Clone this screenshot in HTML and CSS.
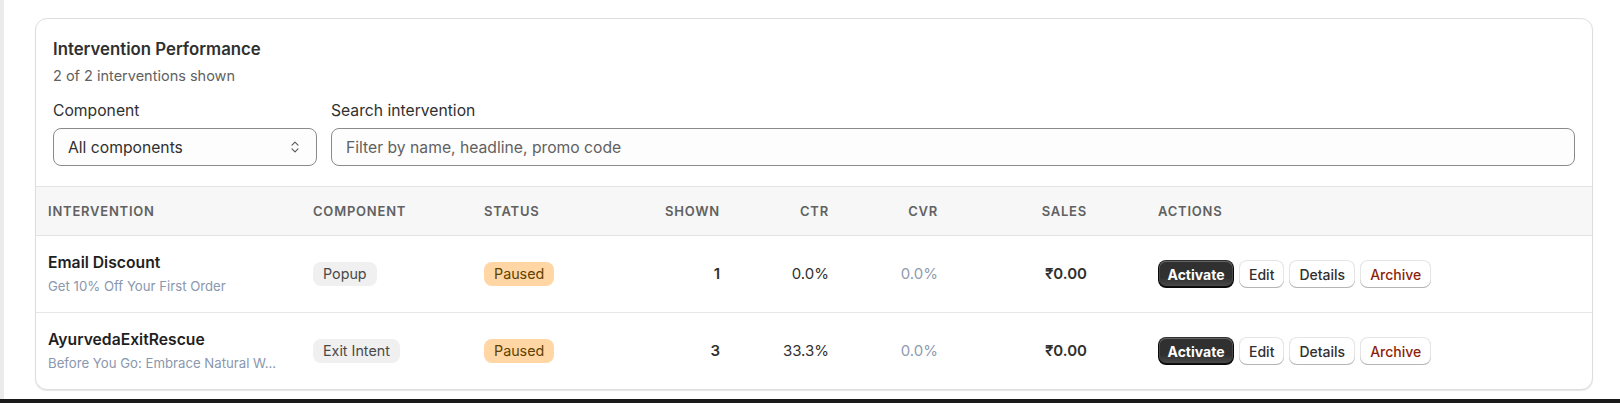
FILE: index.html
```html
<!DOCTYPE html>
<html lang="en">
<head>
<meta charset="utf-8">
<title>Intervention Performance</title>
<link rel="stylesheet" href="styles.css">
</head>
<body>
<div class="screen">
  <div class="rail"></div>
  <main class="main">
    <section class="card">
      <div class="card-head">
        <h2 class="title">Intervention Performance</h2>
        <p class="count">2 of 2 interventions shown</p>
        <div class="filters">
          <div class="field">
            <label class="label" for="comp">Component</label>
            <div class="select" id="comp">
              <span>All components</span>
              <svg class="updown" width="8" height="14" viewBox="0 0 8 14" aria-hidden="true">
                <path d="M1 5.2 L4 2.2 L7 5.2" fill="none" stroke="#5c5c5c" stroke-width="1.2" stroke-linecap="round" stroke-linejoin="round"/>
                <path d="M1 8.8 L4 11.8 L7 8.8" fill="none" stroke="#5c5c5c" stroke-width="1.2" stroke-linecap="round" stroke-linejoin="round"/>
              </svg>
            </div>
          </div>
          <div class="field">
            <label class="label" for="search">Search intervention</label>
            <input class="input" id="search" type="text" placeholder="Filter by name, headline, promo code">
          </div>
        </div>
      </div>

      <div class="table" role="table">
        <div class="row head" role="row">
          <div class="cell" role="columnheader">Intervention</div>
          <div class="cell" role="columnheader">Component</div>
          <div class="cell" role="columnheader">Status</div>
          <div class="cell num" role="columnheader">Shown</div>
          <div class="cell num" role="columnheader">CTR</div>
          <div class="cell num" role="columnheader">CVR</div>
          <div class="cell num" role="columnheader">Sales</div>
          <div class="cell actions" role="columnheader">Actions</div>
        </div>

        <div class="row body" role="row">
          <div class="cell name-cell" role="cell">
            <div class="name">Email Discount</div>
            <div class="sub">Get 10% Off Your First Order</div>
          </div>
          <div class="cell" role="cell"><span class="pill">Popup</span></div>
          <div class="cell" role="cell"><span class="pill warn">Paused</span></div>
          <div class="cell num strong" role="cell">1</div>
          <div class="cell num" role="cell">0.0%</div>
          <div class="cell num muted" role="cell">0.0%</div>
          <div class="cell num strong" role="cell">₹0.00</div>
          <div class="cell actions" role="cell">
            <button class="btn primary">Activate</button>
            <button class="btn">Edit</button>
            <button class="btn">Details</button>
            <button class="btn danger">Archive</button>
          </div>
        </div>

        <div class="row body last" role="row">
          <div class="cell name-cell" role="cell">
            <div class="name">AyurvedaExitRescue</div>
            <div class="sub">Before You Go: Embrace Natural W...</div>
          </div>
          <div class="cell" role="cell"><span class="pill">Exit Intent</span></div>
          <div class="cell" role="cell"><span class="pill warn">Paused</span></div>
          <div class="cell num strong" role="cell">3</div>
          <div class="cell num" role="cell">33.3%</div>
          <div class="cell num muted" role="cell">0.0%</div>
          <div class="cell num strong" role="cell">₹0.00</div>
          <div class="cell actions" role="cell">
            <button class="btn primary">Activate</button>
            <button class="btn">Edit</button>
            <button class="btn">Details</button>
            <button class="btn danger">Archive</button>
          </div>
        </div>
      </div>
    </section>
  </main>
</div>
<div class="taskbar"></div>
</body>
</html>
```

FILE: styles.css
```css
* { box-sizing: border-box; }

html, body {
  margin: 0;
  padding: 0;
  background: #ffffff;
  font-family: Inter, "Noto Sans", "Liberation Sans", sans-serif;
  color: #303030;
}

.screen {
  display: flex;
  height: 399px;
  overflow: hidden;
}

.rail {
  width: 4px;
  flex: 0 0 4px;
  background: #ebebeb;
}

.main {
  flex: 1;
  padding: 18px 0 0 31px;
}

.taskbar {
  height: 4px;
  background: #1a1a1a;
}

.card {
  width: 1558px;
  border: 1px solid #dedede;
  border-radius: 12px;
  background: #ffffff;
  box-shadow: 0 1px 1px rgba(0, 0, 0, 0.10);
  overflow: hidden;
}

.card-head {
  padding: 18px 17px 20px 17px;
}

.title {
  margin: 0;
  font-size: 16.8px;
  line-height: 24px;
  font-weight: 600;
  color: #303030;
}

.count {
  margin: 3px 0 0;
  font-size: 14.5px;
  line-height: 24px;
  color: #616161;
}

.filters {
  margin-top: 13px;
  display: grid;
  grid-template-columns: 264px 1fr;
  column-gap: 14px;
}

.label {
  display: block;
  font-size: 15.7px;
  line-height: 20px;
  color: #303030;
  margin-bottom: 7px;
}

.select,
.input {
  height: 38px;
  width: 100%;
  border: 1px solid #8a8a8a;
  border-radius: 8px;
  background: #fdfdfd;
  font-family: inherit;
  font-size: 15.7px;
  color: #303030;
}

.select {
  display: flex;
  align-items: center;
  justify-content: space-between;
  padding: 0 17px 0 14px;
}

.input {
  padding: 0 14px;
  outline: none;
}

.input::placeholder {
  color: #616161;
  opacity: 1;
}

.updown { display: block; }

/* table */
.row {
  display: grid;
  grid-template-columns: 265px 171px 151px 109px 109px 109px 149px 1fr;
  align-items: center;
}

.row.head {
  height: 50px;
  background: #f7f7f7;
  border-top: 1px solid #e3e3e3;
  border-bottom: 1px solid #e3e3e3;
}

.row.body {
  height: 77px;
  border-bottom: 1px solid #e6e6e6;
}

.row.body.last {
  height: 76px;
  border-bottom: 0;
}

.cell {
  padding: 0 12px;
  font-size: 15px;
  line-height: 20px;
  min-width: 0;
}

.head .cell {
  font-size: 13px;
  font-weight: 600;
  letter-spacing: 0.06em;
  text-transform: uppercase;
  color: #616161;
}

.num { text-align: right; }
.strong { font-weight: 600; color: #303030; }
.muted { color: #8f9bb0; }

.cell.actions {
  padding-left: 59px;
  display: flex;
  gap: 5px;
  align-items: center;
}

.name {
  font-size: 15.7px;
  line-height: 20px;
  font-weight: 600;
  color: #1f1f1f;
}

.sub {
  margin-top: 5px;
  font-size: 13.2px;
  line-height: 17px;
  color: #8a97ad;
  white-space: nowrap;
  overflow: hidden;
}

.pill {
  display: inline-flex;
  align-items: center;
  height: 24px;
  padding: 0 10px;
  border-radius: 8px;
  background: #f0f0f0;
  color: #4a4a4a;
  font-size: 14.3px;
}

.pill.warn {
  background: #ffd6a4;
  color: #5e4200;
}

.btn {
  height: 28px;
  padding: 0 10px;
  border: 0;
  border-radius: 8px;
  font-family: inherit;
  font-size: 14px;
  font-weight: 500;
  color: #303030;
  background: #ffffff;
  box-shadow: inset 0 -1px 0 0 #b5b5b5, inset 0 0 0 1px rgba(0, 0, 0, 0.1), inset 0 0.5px 0 1.5px #ffffff;
  cursor: pointer;
}

.btn.primary {
  padding: 0 9.5px;
  font-weight: 650;
  color: #ffffff;
  background: linear-gradient(180deg, rgba(48, 48, 48, 0) 63%, rgba(255, 255, 255, 0.15) 100%), #303030;
  box-shadow: inset 0 -1px 0 1px rgba(0, 0, 0, 0.8), inset 0 0 0 1px #303030, inset 0 0.5px 0 1.5px rgba(255, 255, 255, 0.25);
}

.btn.danger {
  color: #8e1f0b;
}
```
